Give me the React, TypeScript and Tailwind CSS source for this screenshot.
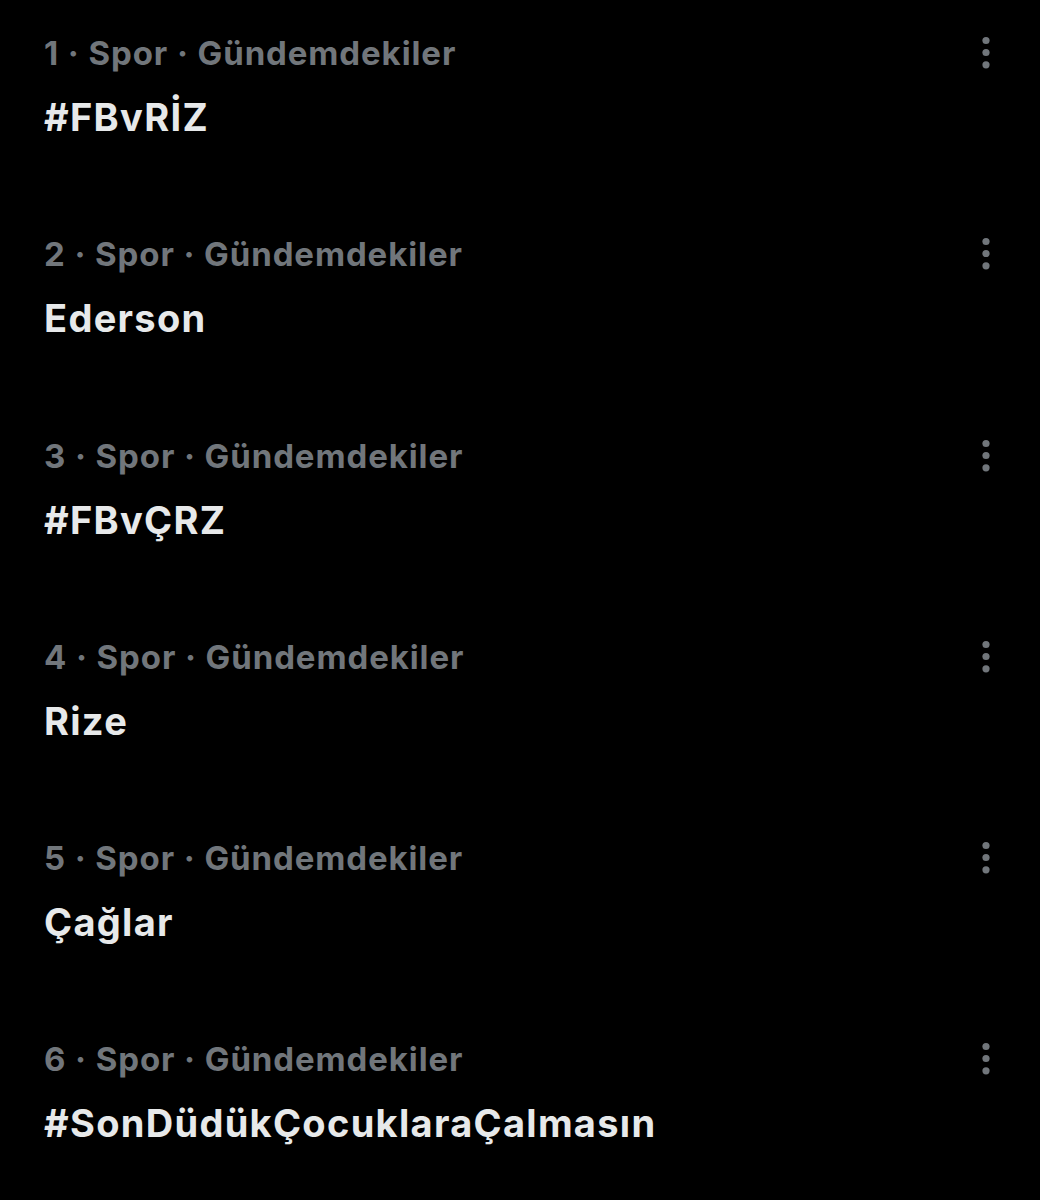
import React from "react";

const items = [
  { n: 1, title: "#FBvRİZ" },
  { n: 2, title: "Ederson" },
  { n: 3, title: "#FBvÇRZ" },
  { n: 4, title: "Rize" },
  { n: 5, title: "Çağlar" },
  { n: 6, title: "#SonDüdükÇocuklaraÇalmasın" },
];

function Dots() {
  return (
    <svg width="14" height="40" viewBox="0 0 14 40" className="shrink-0">
      <circle cx="7" cy="7.5" r="3.6" fill="#71767b" />
      <circle cx="7" cy="19.5" r="3.6" fill="#71767b" />
      <circle cx="7" cy="31.8" r="3.6" fill="#71767b" />
    </svg>
  );
}

export default function App() {
  return (
    <div
      className="w-[1040px] h-[1200px] bg-black overflow-hidden pt-[14px]"
      style={{ fontFamily: "Inter, Roboto, 'Liberation Sans', sans-serif" }}
    >
      {items.map((it) => (
        <div key={it.n} className="h-[201.3px] pl-[44px] pr-[47px] flex items-start">
          <div className="flex-1 flex flex-col">
            <div className="text-[33px] leading-[78px] h-[78px] font-bold tracking-[0.9px] text-[#71767b] flex items-center">
              {it.n} · Spor · Gündemdekiler
            </div>
            <div className="text-[38px] leading-[50px] font-bold tracking-[1.3px] text-[#e7e9ea]">
              {it.title}
            </div>
          </div>
          <div className="pt-[19px]">
            <Dots />
          </div>
        </div>
      ))}
    </div>
  );
}
